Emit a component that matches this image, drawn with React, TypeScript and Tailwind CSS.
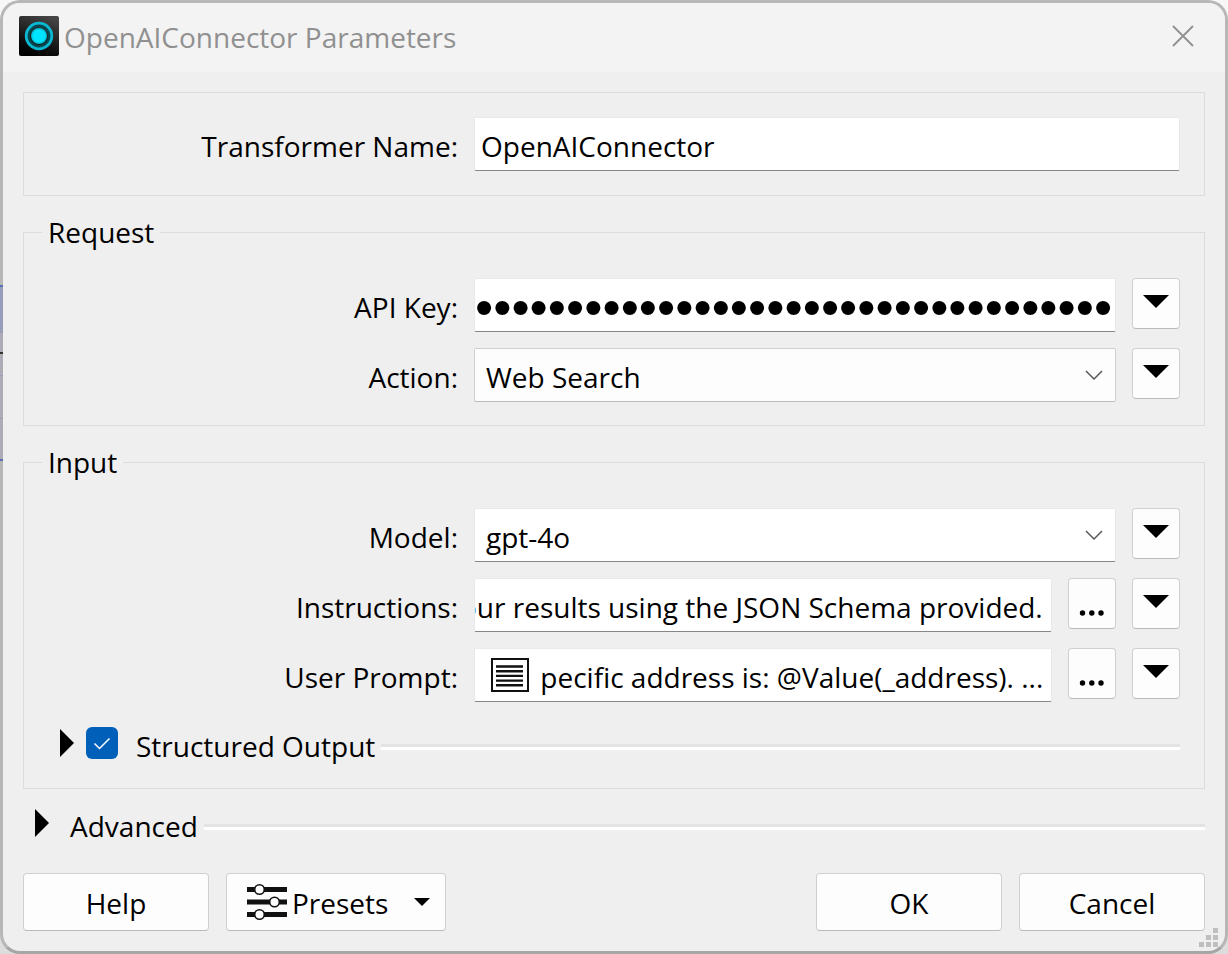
import React, { useLayoutEffect, useRef } from 'react';
import { clsx } from 'clsx';

const API_KEY = 'sk-proj-0000000000000000000000000000'.slice(0, 35);

const fieldShape = 'h-[54px] w-full min-w-0 rounded-xs border text-black outline-none';
const fieldBase = `${fieldShape} border-[#e9e9e9] border-b-[#868686] bg-white`;
const buttonBase = 'rounded-[4px] border border-[#d0d0d0] border-b-[#bababa] bg-[#fdfdfd]';

const DownTriangle: React.FC<{ small?: boolean }> = ({ small }) => (
    <svg viewBox="0 0 26 13" className={clsx('shrink-0', small ? 'h-2 w-4' : 'mb-1 h-[13px] w-[26px]')} aria-hidden="true">
        <path d="M0 0H26L13 13Z" fill="#000" />
    </svg>
);

const RightTriangle: React.FC = () => (
    <svg viewBox="0 0 14 28" className="h-7 w-[14px]" aria-hidden="true">
        <path d="M0 0L14 14L0 28Z" fill="#000" />
    </svg>
);

const ToolButton: React.FC<{ label: string; children: React.ReactNode; className?: string }> = ({
    label,
    children,
    className,
}) => (
    <button
        type="button"
        aria-label={label}
        className={clsx(buttonBase, 'flex h-[51px] w-12 shrink-0 justify-center', className ?? 'items-center')}
    >
        {children}
    </button>
);

const OptionsButton: React.FC<{ field: string }> = ({ field }) => (
    <ToolButton label={`${field} options`}>
        <DownTriangle />
    </ToolButton>
);

const EditButton: React.FC<{ field: string }> = ({ field }) => (
    <ToolButton label={`Edit ${field}`} className="items-end pb-3">
        <svg viewBox="0 0 26 6" className="h-[6px] w-[26px]" aria-hidden="true">
            <circle cx="3.5" cy="3" r="2.7" />
            <circle cx="12.8" cy="3" r="2.7" />
            <circle cx="22" cy="3" r="2.7" />
        </svg>
    </ToolButton>
);

const Row: React.FC<{ id: string; label: string; children: React.ReactNode }> = ({ id, label, children }) => (
    <div className="grid grid-cols-[434px_1fr] items-start gap-4">
        <label htmlFor={id} className="pb-[5px] pt-[9px] text-right leading-10">
            {label}
        </label>
        <div className="flex min-w-0 items-start gap-4">{children}</div>
    </div>
);

const SelectField: React.FC<{ id: string; value: string; editable?: boolean }> = ({ id, value, editable }) => (
    <div className="relative min-w-0 flex-1">
        <select
            id={id}
            defaultValue={value}
            className={clsx(
                'appearance-none px-[11px] pt-1',
                editable ? fieldBase : `${fieldShape} border-[#d0d0d0] border-b-[#bababa] bg-[#fdfdfd]`
            )}
        >
            <option>{value}</option>
        </select>
        <svg
            viewBox="0 0 18 10"
            className="pointer-events-none absolute right-[13px] top-[22px] h-[10px] w-[18px]"
            aria-hidden="true"
        >
            <path d="M1 1L9 9L17 1" fill="none" stroke="#5a5a5a" strokeWidth="1.5" />
        </svg>
    </div>
);

const TailInput: React.FC<{ id: string; value: string; className?: string }> = ({ id, value, className }) => {
    const ref = useRef<HTMLInputElement>(null);

    useLayoutEffect(() => {
        if (ref.current) ref.current.scrollLeft = ref.current.scrollWidth;
    }, []);

    return <input ref={ref} id={id} type="text" defaultValue={value} className={className} />;
};

const Group: React.FC<{ title: string; children: React.ReactNode; className?: string }> = ({
    title,
    children,
    className,
}) => (
    <fieldset className={clsx('min-w-0 border border-[#dcdcdc] pr-6', className)}>
        <legend className="ml-[18px] px-[6px] leading-9">{title}</legend>
        <div className="flex flex-col gap-4 pt-7">{children}</div>
    </fieldset>
);

const Rule: React.FC = () => (
    <span className="mt-2 h-[6px] flex-1 border-b-[3px] border-t-[3px] border-b-white border-t-[#e3e3e3]" />
);

export default function App() {
    return (
        <div className="min-h-screen bg-linear-to-b from-[#f7f7f7] to-[#dddddd] font-['Open_Sans','Noto_Sans',sans-serif] text-[28px] text-black">
            <main className="relative flex min-h-screen flex-col overflow-hidden rounded-[20px] border-[3px] border-[#b7b7b7] border-b-[#a6a6a6] bg-[#efefef]">
                <header className="flex h-[69px] items-start justify-between bg-[#f3f3f3] pl-4 pr-[31px] pt-[13px]">
                    <div className="flex items-start gap-[5px]">
                        <svg viewBox="0 0 40 40" className="size-10" aria-hidden="true">
                            <defs>
                                <linearGradient id="tile" x1="0.7" y1="0" x2="0.3" y2="1">
                                    <stop offset="0" stopColor="#454545" />
                                    <stop offset="0.75" stopColor="#0c0c0c" />
                                    <stop offset="1" stopColor="#000" />
                                </linearGradient>
                                <radialGradient id="core">
                                    <stop offset="0.7" stopColor="#00e5ff" />
                                    <stop offset="1" stopColor="#00b4cc" />
                                </radialGradient>
                            </defs>
                            <rect width="40" height="40" rx="2" fill="url(#tile)" />
                            <circle cx="20" cy="20" r="10.5" fill="none" stroke="#064750" strokeWidth="3" />
                            <circle cx="20" cy="20" r="12.8" fill="none" stroke="#0bb8d2" strokeWidth="2.8" />
                            <circle cx="20" cy="20" r="8" fill="url(#core)" />
                        </svg>
                        <h1 className="leading-[42px] text-[#909090]">OpenAIConnector Parameters</h1>
                    </div>
                    <button type="button" aria-label="Close" className="flex h-10 items-center">
                        <svg viewBox="0 0 22 22" className="size-[22px]" aria-hidden="true">
                            <path d="M1 1L21 21M21 1L1 21" stroke="#909090" strokeWidth="1.8" />
                        </svg>
                    </button>
                </header>

                <form className="flex flex-1 flex-col px-5 pb-5 pt-5" onSubmit={(e) => e.preventDefault()}>
                    <section className="border border-[#dcdcdc] py-6 pr-6">
                        <Row id="name" label="Transformer Name:">
                            <input
                                id="name"
                                type="text"
                                defaultValue="OpenAIConnector"
                                className={clsx(fieldBase, 'px-[6px] pt-1')}
                            />
                        </Row>
                    </section>

                    <Group title="Request" className="mt-[18px] pb-[23px]">
                        <Row id="key" label="API Key:">
                            <input
                                id="key"
                                type="password"
                                defaultValue={API_KEY}
                                className={clsx(fieldBase, "flex-1 pt-1 font-['Liberation_Sans',sans-serif] text-[52px]")}
                            />
                            <OptionsButton field="API Key" />
                        </Row>
                        <Row id="action" label="Action:">
                            <SelectField id="action" value="Web Search" />
                            <OptionsButton field="Action" />
                        </Row>
                    </Group>

                    <Group title="Input" className="mt-[18px] pb-5">
                        <Row id="model" label="Model:">
                            <SelectField id="model" value="gpt-4o" editable />
                            <OptionsButton field="Model" />
                        </Row>
                        <Row id="instructions" label="Instructions:">
                            <TailInput
                                id="instructions"
                                value="your results using the JSON Schema provided."
                                className={clsx(fieldBase, 'flex-1 pr-2 pt-1')}
                            />
                            <EditButton field="Instructions" />
                            <OptionsButton field="Instructions" />
                        </Row>
                        <Row id="prompt" label="User Prompt:">
                            <div className={clsx(fieldBase, 'flex flex-1 items-center gap-3 pl-4 pr-2')}>
                                <svg viewBox="0 0 38 34" className="h-[34px] w-[38px] shrink-0" aria-hidden="true">
                                    <rect x="1" y="1" width="36" height="32" fill="#fff" stroke="#111" strokeWidth="2" />
                                    <path d="M5 8.5H32M5 13.2H32M5 17.9H32M5 22.6H32M5 27.3H32" stroke="#111" strokeWidth="2.4" />
                                </svg>
                                <TailInput
                                    id="prompt"
                                    value="specific address is: @Value(_address). ..."
                                    className="min-w-0 flex-1 bg-transparent pt-1 outline-none"
                                />
                            </div>
                            <EditButton field="User Prompt" />
                            <OptionsButton field="User Prompt" />
                        </Row>
                        <div className="flex h-[50px] items-center pl-9">
                            <button type="button" aria-label="Expand Structured Output" className="mr-3">
                                <RightTriangle />
                            </button>
                            <label className="flex items-center gap-[18px]">
                                <span className="relative size-8">
                                    <input
                                        type="checkbox"
                                        defaultChecked
                                        className="block size-8 appearance-none rounded-md bg-[#005fb8]"
                                    />
                                    <svg viewBox="0 0 32 32" className="pointer-events-none absolute inset-0" aria-hidden="true">
                                        <path d="M8.5 16.5L13.5 21.5L23.5 11.5" fill="none" stroke="#fff" strokeWidth="1.5" />
                                    </svg>
                                </span>
                                <span className="pr-[6px] pt-[6px] leading-10">Structured Output</span>
                            </label>
                            <Rule />
                        </div>
                    </Group>

                    <div className="mt-[9px] flex h-[50px] items-center pl-3">
                        <button type="button" aria-label="Expand Advanced" className="mr-[21px]">
                            <RightTriangle />
                        </button>
                        <span className="pr-[6px] pt-[6px] leading-10">Advanced</span>
                        <Rule />
                    </div>

                    <footer className="mt-[25px] flex justify-between">
                        <div className="flex gap-[17px]">
                            <button type="button" className={clsx(buttonBase, 'h-[58px] w-[186px] pt-[2px]')}>
                                Help
                            </button>
                            <button
                                type="button"
                                className={clsx(buttonBase, 'flex h-[58px] w-[220px] items-center pl-5 pr-[15px]')}
                            >
                                <svg viewBox="0 0 40 38" className="mr-[5px] h-[38px] w-10" aria-hidden="true">
                                    <path d="M0 6.5H40M0 19H40M0 31.5H40" stroke="#111" strokeWidth="5" />
                                    <g fill="#fff" stroke="#111" strokeWidth="1.6">
                                        <circle cx="12.5" cy="6.5" r="4.8" />
                                        <circle cx="27.5" cy="19" r="4.8" />
                                        <circle cx="12.5" cy="31.5" r="4.8" />
                                    </g>
                                </svg>
                                <span className="flex-1 pt-[2px] text-left">Presets</span>
                                <DownTriangle small />
                            </button>
                        </div>
                        <div className="flex gap-[17px]">
                            <button type="submit" className={clsx(buttonBase, 'h-[58px] w-[186px] pt-[2px]')}>
                                OK
                            </button>
                            <button type="button" className={clsx(buttonBase, 'h-[58px] w-[186px] pt-[2px]')}>
                                Cancel
                            </button>
                        </div>
                    </footer>
                </form>

                {/* Resize grip */}
                <svg viewBox="0 0 19 19" className="absolute bottom-1 right-[7px] size-[19px]" aria-hidden="true">
                    <path
                        d="M14 0h5v5h-5zM7 7h5v5H7zM14 7h5v5h-5zM0 14h5v5H0zM7 14h5v5H7zM14 14h5v5h-5z"
                        fill="#bfbfbf"
                    />
                </svg>
            </main>

            {/* Canvas node showing through the window's left edge */}
            <svg viewBox="0 0 3 176" className="absolute left-0 top-[285px] h-44 w-[3px]" aria-hidden="true">
                <rect width="3" height="48" fill="#989db9" />
                <rect y="48" width="3" height="128" fill="#adabb5" />
                <rect y="0" width="3" height="2" fill="#5a6fb8" />
                <rect y="67" width="3" height="2" fill="#333" />
                <rect y="90" width="3" height="1" fill="#989db9" />
                <rect y="133" width="3" height="1" fill="#989db9" />
                <rect y="174" width="3" height="2" fill="#5a6fb8" />
            </svg>
        </div>
    );
}
